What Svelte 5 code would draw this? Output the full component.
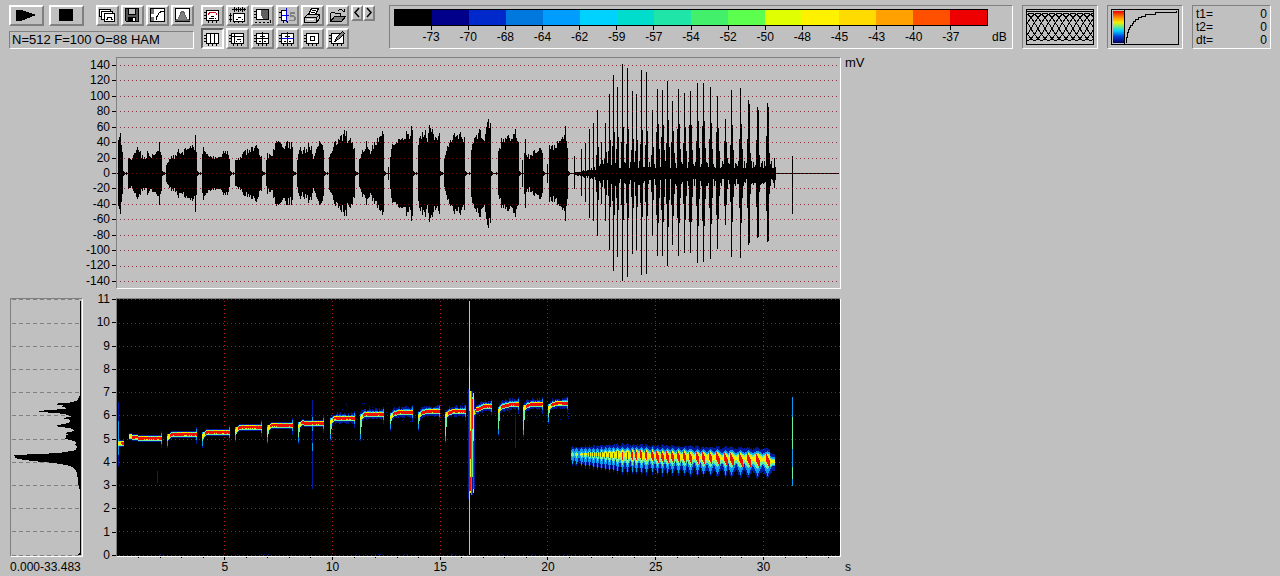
<script lang="ts">
  type Shape = [fill: string, stroke: string, d: string];
  type Tool = { label: string; shapes: Shape[]; pressed?: boolean };

  const DURATION = 33.55;
  const PLOT_WIDTH = 723;
  const WAVE_HEIGHT = 230;
  const SPEC_HEIGHT = 257;

  const ink = "#000";
  const chart = "M3.5 3.5H15.5V13.5H3.5ZM1 5.5H3M1 8.5H3M1 11.5H3M5.5 14V16M9.5 14V16M13.5 14V16";

  const fileTools: Tool[] = [
    {
      label: "Copy window",
      shapes: [
        ["#fff", ink, "M1.5 2.5H12.5V9.5H1.5Z"],
        ["#fff", ink, "M3.5 4.5H14.5V12.5H3.5Z"],
        ["#fff", ink, "M6.5 6.5H16.5V14.5H6.5Z"],
        ["none", ink, "M8 12.5H9.5V10.5H13.5V12.5H15"],
      ],
    },
    {
      label: "Save",
      shapes: [
        ["#555", ink, "M2.5 1.5H15.5V14.5H3.5L2.5 13.5Z"],
        ["#c0c0c0", ink, "M5.5 1.5H12.5V7.5H5.5Z"],
        [ink, ink, "M5.5 10.5H12.5V14.5H5.5Z"],
        ["#fff", "none", "M10 11H12V14H10Z"],
      ],
    },
    {
      label: "Transfer curve",
      shapes: [
        ["#fff", ink, "M2.5 1.5H16.5V14.5H2.5Z"],
        ["#777", "none", "M3 2H6V7H3ZM3 10H6V14H3Z"],
        ["none", ink, "M8.5 13V10.5L9.5 8.5L11.5 5.5L13.5 4.5H16"],
      ],
    },
    {
      label: "Window function",
      shapes: [
        ["#fff", ink, "M2.5 1.5H16.5V14.5H2.5Z"],
        ["#808080", "#606060", "M3 13.5L5.5 11.5L7.5 6.5L8.5 4.5H10.5L11.5 6.5L13.5 11.5L16 13.5Z"],
      ],
    },
  ];

  const viewTools: Tool[] = [
    {
      label: "Spectrogram",
      shapes: [
        ["#fff", ink, chart],
        ["none", "#d01020", "M5.5 8V6.5L7.5 5.5H12.5L13.5 6.5V8"],
        ["none", ink, "M6 11.5H7.5M8 9.5H11M11.5 11.5H13M8 11.5H11"],
      ],
    },
    {
      label: "Waveform and spectrogram",
      shapes: [
        ["none", ink, "M4 2.5H18M6.5 0V5M8.5 1V4M10.5 0V5M12.5 1V4M14.5 0V5M16.5 1V4"],
        ["#fff", ink, "M5.5 6.5H16.5V14.5H5.5Z"],
        ["none", ink, "M2.5 6V15M1 8.5H4M1 12.5H4M8 12.5H9.5M10 10.5H13M13.5 12.5H15M6.5 15V16M10.5 15V16M14.5 15V16"],
      ],
    },
    {
      label: "Shaded selection",
      shapes: [
        ["#fff", ink, "M3.5 2.5H15.5V12.5H3.5Z"],
        ["#606060", "none", "M8 3H15V12H10L8 8Z"],
        ["none", ink, "M1 4.5H3M1 7.5H3M1 10.5H3M2 15.5H4M6 15.5H8M10 15.5H12M14 15.5H16M17.5 13V16"],
      ],
    },
    {
      label: "Synthesis",
      shapes: [
        ["#fff", "none", "M3 3H9V13H3Z"],
        ["none", ink, "M9 3.5H3.5V13.5H9M1 5.5H3M1 10.5H3M5.5 14V16M9.5 14V16"],
        ["none", "#0000e0", "M8.5 1V15M4 8.5H11"],
        ["none", "#808080", "M17 5.5H12.5V9.5H16.5V13.5H11M17 6.5H13M12 8.5H16M17.5 10V13"],
      ],
    },
    {
      label: "Print",
      shapes: [
        ["#fff", ink, "M5.5 7.5L8.5 1.5H15.5L12.5 7.5Z"],
        ["none", ink, "M9 3.5H13M8 5.5H12"],
        ["#c0c0c0", ink, "M1.5 10.5L4.5 7.5H16.5V11.5L13.5 15.5H1.5Z"],
        ["none", ink, "M2 10.5H13.5V15M13.5 10.5L16.5 7.5"],
        ["#fff", "none", "M4 12H11V13H4Z"],
      ],
    },
    {
      label: "Open",
      shapes: [
        ["#c0c0c0", ink, "M2.5 14.5V6.5L3.5 5.5H6.5L7.5 6.5H12.5V9"],
        ["#808080", ink, "M2.5 14.5L6.5 9.5H17.5L13.5 14.5Z"],
        ["none", ink, "M10 3.5H11M11 2.5H14M14 3.5H15M15 4.5H17M16.5 2V5"],
      ],
    },
    {
      label: "Vertical cursors",
      pressed: true,
      shapes: [
        ["#fff", ink, chart],
        ["none", ink, "M7.5 4V13M11.5 4V13"],
      ],
    },
    {
      label: "Horizontal cursor",
      shapes: [
        ["#fff", ink, chart],
        ["none", ink, "M3 6.5H15M6.5 4V13M9 9.5H13M8 11.5H9M12 11.5H13"],
      ],
    },
    {
      label: "Crosshair",
      shapes: [
        ["#fff", ink, chart],
        ["none", ink, "M9.5 2V15M3 8.5H16M7 6.5H12M6 11.5H8M11 11.5H13"],
      ],
    },
    {
      label: "Free crosshair",
      shapes: [
        ["#fff", ink, chart],
        ["none", "#0000e0", "M9.5 2V15M3 8.5H16"],
        ["none", ink, "M7 6.5H9M10 6.5H12M6 11.5H8M11 11.5H13"],
      ],
    },
    {
      label: "Marker box",
      shapes: [
        ["#fff", ink, chart],
        ["none", ink, "M7.5 6.5H11.5V10.5H7.5Z"],
      ],
    },
    {
      label: "Edit label",
      shapes: [
        ["#fff", ink, chart],
        ["#808080", ink, "M7.5 10.5L8.5 7.5L14.5 1.5L16.5 3.5L10.5 9.5Z"],
        ["none", ink, "M6 11.5H8"],
      ],
    },
  ];

  const scaleColors = [
    "#000000", "#00008a", "#0029cc", "#0078dd", "#009dff", "#00d2ff", "#00ddcc", "#1fe6a8",
    "#43f06b", "#5dff4f", "#e0ff00", "#fff200", "#ffdb00", "#ffa100", "#ff5000", "#ee0000",
  ];
  const scaleLabels = [-73, -70, -68, -64, -62, -59, -57, -54, -52, -50, -48, -45, -43, -40, -37];

  const levels = Array.from({ length: 15 }, (_, i) => 140 - i * 20);
  const freqs = Array.from({ length: 12 }, (_, i) => 11 - i);
  const majorTimes = [5, 10, 15, 20, 25, 30];
  const seconds = Array.from({ length: 33 }, (_, i) => i + 1);

  const levelY = (mv: number) => Math.floor(115.5 - mv * 0.771) + 0.5;
  const freqY = (khz: number) => Math.floor(256 - khz * 23.2) + 0.5;
  const timeX = (s: number) => Math.floor((s / DURATION) * PLOT_WIDTH) + 0.5;

  // repeatable noise in 0..1
  function noise(n: number) {
    const v = Math.sin(n * 127.1 + 11.7) * 43758.5453;
    return v - Math.floor(v);
  }

  // whistles: first column, last column, peak height along the way
  const bursts: [number, number, number[]][] = [
    [1, 5, [36, 39, 39, 20]],
    [11, 44, [17, 15, 18, 25, 24, 17, 15, 21, 17, 18, 20, 24, 18]],
    [49, 79, [9, 14, 16, 18, 23, 19, 22, 25, 27, 28, 26]],
    [85, 112, [22, 25, 19, 19, 15, 14, 19, 20, 23, 17]],
    [118, 144, [14, 14, 14, 20, 24, 22, 27, 23, 28, 21, 16]],
    [149, 175, [12, 18, 18, 31, 34, 30, 29, 31, 29, 30]],
    [180, 206, [16, 27, 21, 26, 22, 33, 24, 12, 29, 32, 30, 24]],
    [212, 237, [16, 25, 30, 33, 37, 36, 42, 36, 35, 34, 25]],
    [242, 266, [15, 22, 30, 23, 28, 31, 38, 42]],
    [273, 295, [18, 31, 34, 35, 34, 35, 42, 39, 42]],
    [301, 322, [29, 38, 40, 44, 36, 46, 44, 38, 36, 41]],
    [327, 347, [14, 26, 34, 31, 40, 36, 38, 41, 34]],
    [354, 373, [27, 33, 38, 48, 37, 37, 52, 50]],
    [381, 401, [20, 34, 33, 41, 37, 40, 42, 35]],
    [407, 425, [20, 18, 17, 20, 26, 20, 29, 18]],
    [432, 450, [26, 28, 30, 32, 36, 40, 30]],
  ];

  // single columns that stand out of the whistles
  const strays: [number, number][] = [
    [42, 31], [78, 38], [86, 26], [150, 20], [229, 42], [271, 6], [294, 47], [312, 48],
    [371, 54], [405, 13], [408, 34], [430, 9], [448, 47],
  ];

  // trill pulses: column, peak height
  const pulses: [number, number][] = [
    [457, 17], [464, 24], [468, 30], [472, 44], [476, 50], [480, 63], [484, 31], [488, 50],
    [492, 79], [496, 98], [500, 86], [505, 109], [510, 105], [515, 82], [519, 79], [524, 103],
    [529, 101], [535, 63], [540, 84], [545, 83], [550, 92], [555, 72], [561, 84], [567, 80],
    [573, 82], [580, 90], [586, 90], [593, 86], [600, 77], [608, 54], [614, 83], [623, 85],
    [631, 73], [640, 66], [650, 70], [657, 15],
  ];

  const bar = (x: number, up: number, down = up) =>
    `M${x + 0.5} ${Math.round(115 - up)}V${Math.round(116 + down)}`;

  function waveformPath() {
    let d = "M0 115.5H722";
    for (const [from, to, peaks] of bursts) {
      for (let x = from; x <= to; x++) {
        const at = ((x - from) / (to - from)) * (peaks.length - 1);
        const i = Math.floor(at);
        const next = peaks[Math.min(i + 1, peaks.length - 1)];
        const h = peaks[i] + (next - peaks[i]) * (at - i);
        const rough = Math.min(8, h * 0.3) * noise(x) - 2;
        d += bar(x, h - rough, h - rough - noise(x + 900));
      }
      d += bar(to + 1, 2) + bar(to + 2, 1) + bar(from - 2, 1);
    }
    for (const [x, h] of strays) d += bar(x, h);
    for (let x = 458; x < 659; x++) {
      const body = x < 495 ? 1 + (x - 458) * 0.2 : 9;
      d += bar(x, body * (0.5 + 0.9 * noise(x)), body * (0.5 + 0.9 * noise(x + 50)));
    }
    pulses.forEach(([x, h], i) => {
      d += bar(x, h, h - 3 * noise(i));
      if (i < 5 || i > 34) return;
      d += bar(x + 1, h * (i > 17 ? 0.58 : 0.42)) + bar(x - 1, h * 0.28);
      if (i > 17) d += bar(x + 2, h * 0.28) + bar(x - 1, h * (0.3 + 0.3 * noise(i)));
      if (i > 31) d += bar(x + 1, h * 0.95);
    });
    return d + bar(675, 17, 40);
  }

  // power spectrum outline: row, distance from the right edge
  const spectrum = [
    [98, 1], [101, 2], [103, 7], [104, 14], [105, 30], [106, 17], [108, 19], [109, 12], [110, 17],
    [112, 42], [113, 41], [114, 24], [115, 17], [116, 12], [118, 8], [119, 21], [120, 12], [122, 9],
    [124, 12], [125, 17], [127, 25], [128, 19], [129, 12], [130, 7], [132, 6], [134, 15], [136, 11],
    [137, 17], [138, 12], [139, 16], [141, 11], [142, 6], [144, 4], [146, 5], [148, 3], [151, 4],
    [152, 9], [154, 21], [155, 41], [156, 66], [157, 67], [158, 64], [159, 66], [161, 56], [163, 37],
    [164, 26], [166, 14], [168, 8], [171, 4], [174, 3], [181, 2], [190, 1],
  ];
  const spectrumPath = "M69 96" + spectrum.map(([y, w]) => `L${69 - w} ${y}`).join("") + "L69 190Z";

  // whistle traces: first column, last column, first row, last row, foot of the rising edge
  const traces: number[][] = [
    [1, 6, 144, 144, 144],
    [12, 44, 137, 139, 134],
    [50, 79, 135, 135, 147],
    [85, 112, 133, 133, 147],
    [118, 144, 128, 128, 141],
    [150, 175, 126, 126, 143],
    [181, 206, 123, 124, 143],
    [213, 237, 119, 119, 140],
    [243, 266, 115, 115, 140],
    [273, 295, 114, 113, 130],
    [301, 322, 113, 112, 130],
    [328, 348, 113, 112, 142],
    [355, 374, 112, 107, 118],
    [381, 401, 108, 105, 135],
    [406, 425, 106, 105, 136],
    [431, 450, 105, 104, 123],
  ];

  const layerColors = ["#001a9c", "#0a9cf0", "#6cf0a0", "#f4f000", "#f01000"];

  function spectrogramPaths() {
    const layers = ["", "", "", "", ""];
    const put = (layer: number, x: number, top: number, bottom: number) => {
      if (bottom > top) layers[layer] += `M${x + 0.5} ${Math.round(top)}V${Math.round(bottom)}`;
    };

    for (const [from, to, y0, y1, foot] of traces) {
      const loud = from > 210 ? 2 : 0;
      for (let x = from; x <= to; x++) {
        const edge = x - from;
        const dip = foot > y0 && edge < 4 ? (4 - edge) * 0.9 : 0;
        const y = Math.round(y0 + (y1 - y0) * Math.min(1, edge / 12) + dip);
        const r = noise(x * 3 + y0);
        put(0, x, y - 3 - loud * r * 1.6, y + 4 + loud * noise(x + 7));
        put(1, x, y - 2 - (loud ? r * 1.5 : 0), y + 3);
        put(2, x, y - 2, y + 3);
        put(3, x, y - 2 + (r > 0.5 ? 1 : 0), y + 2);
        if (edge > 2) put(4, x, y - 1, y + 1 + (r > 0.2 ? 1 : 0));
      }
      if (foot > y0) {
        put(0, from, y0, foot + 2);
        put(1, from, y0, foot);
        put(2, from, y0 + 2, foot - 5);
        put(2, from + 1, y0, y0 + (foot - y0) * 0.5);
        put(3, from + 1, y0, y0 + 5);
      }
      if (from > 6) {
        put(0, to, y1 - 7, y1 + 10);
        put(1, to, y1 - 5, y1 + 6);
        put(3, to, y1 - 2, y1 + 3);
      }
    }

    // clicks
    put(0, 1, 103, 167);
    put(1, 1, 122, 156);
    put(0, 195, 101, 190);
    put(1, 195, 118, 132);
    put(1, 195, 144, 152);
    put(0, 40, 172, 184);
    put(0, 398, 118, 149);
    put(1, 675, 98, 187);
    put(2, 675, 118, 150);
    put(2, 675, 168, 180);
    put(2, 352, 2, 256);
    put(3, 352, 68, 90);
    put(1, 352, 194, 232);
    put(0, 351, 90, 200);
    put(0, 355, 92, 196);
    put(0, 357, 100, 190);
    put(1, 354, 92, 196);
    put(3, 353, 92, 194);
    put(3, 356, 94, 194);
    put(2, 355, 98, 178);
    put(4, 352, 112, 192);
    put(4, 353, 132, 160);
    put(4, 353, 178, 192);
    put(4, 355, 100, 130);
    put(4, 356, 142, 190);

    const centers = [455, 459, ...pulses.slice(1, -1).map((p) => p[0])];
    for (let x = 454; x < 658; x++) {
      let near = 0;
      centers.forEach((c, i) => {
        if (Math.abs(x - c) < Math.abs(x - centers[near])) near = i;
      });
      const gap = ((centers[near + 1] ?? 659) - centers[near]) / 2;
      const dx = x - centers[near];
      const s = Math.max(0, 1 - Math.abs(dx) / gap);
      const filled = Math.min(1, (x - 454) / 50);
      const grow = (0.6 + 0.4 * filled) * (x > 652 ? 0.85 : 1);
      const y = 155 + (x - 454) * 0.03 + (x > 652 ? 2 : 0);
      const r = noise(x);
      put(0, x, y - (9 + 2 * s + 2 * r) * grow, y + (10 + 8 * s + 2 * r) * grow);
      if (x < 486 && s < 0.4) {
        put(1, x, y - 3, y + 4);
        continue;
      }
      put(1, x, y - (6 + 3 * s) * grow, y + (5 + 11 * s) * grow);
      put(2, x, y - (4 * filled + 3 * s) * grow, y + (4 * filled + 5 * s) * grow);
      put(3, x, y - (2 + 4 * s) * filled, y + (1 + 4 * s) * filled);
      const wide = x > 510 ? 1 : 0;
      if (x > 468 && dx >= -wide && dx <= (x > 535 ? 1 : 0) + (x > 595 ? 1 : 0)) {
        const tilt = dx * 2;
        const half = x < 500 ? 2.5 : 4;
        put(4, x, y - half + tilt, y + half + tilt);
      }
    }

    // faint specks round the traces
    for (let i = 0; i < 90; i++) {
      const x = Math.floor(210 + noise(i) * 245);
      const y = 104 + noise(i + 300) * 18;
      put(0, x, y, y + 1);
    }
    for (let i = 0; i < 24; i++) put(0, Math.floor(noise(i + 70) * 560), 255, 256);
    return layers;
  }

  const wave = waveformPath();
  const layers = spectrogramPaths();

  // overlapping analysis windows
  const windows = Array.from({ length: 18 }, (_, k) => {
    let d = "";
    for (let i = 0; i <= 52; i += 2) {
      const x = (k - 8) * 7 + i;
      const y = 32 - 28 * (0.5 - 0.5 * Math.cos((2 * Math.PI * i) / 52));
      d += `${i ? "L" : "M"}${x} ${y.toFixed(1)}`;
    }
    return d;
  }).join("");
</script>

{#snippet toolButton(tool: Tool)}
  <button type="button" class="tool" class:pressed={tool.pressed} aria-label={tool.label}>
    <svg viewBox="0 0 19 17" width="19" height="17" aria-hidden="true">
      {#each tool.shapes as [fill, stroke, d]}
        <path {fill} {stroke} {d} />
      {/each}
    </svg>
  </button>
{/snippet}

<div class="app">
  <header class="toolbar">
    <div class="transport">
      <div class="row">
        <button type="button" class="wide" aria-label="Play">
          <svg viewBox="0 0 31 17" width="31" height="17" aria-hidden="true">
            <path d="M5 3H10L24 7.500V8.500L10 14H5Z" />
          </svg>
        </button>
        <button type="button" class="wide" aria-label="Stop">
          <svg viewBox="0 0 31 17" width="31" height="17" aria-hidden="true">
            <path d="M8 2H22V14H8Z" />
          </svg>
        </button>
        <div class="tools file">
          {#each fileTools as tool}
            {@render toolButton(tool)}
          {/each}
        </div>
      </div>
      <output class="sunken status">N=512 F=100 O=88 HAM</output>
    </div>

    <div class="tools view">
      {#each viewTools as tool}
        {@render toolButton(tool)}
      {/each}
    </div>

    <div class="steps">
      <button type="button" class="step" aria-label="Previous">
        <svg viewBox="0 0 8 12" width="8" height="12" aria-hidden="true"><path d="M6 1L2 5.500L6 10" /></svg>
      </button>
      <button type="button" class="step" aria-label="Next">
        <svg viewBox="0 0 8 12" width="8" height="12" aria-hidden="true"><path d="M2 1L6 5.500L2 10" /></svg>
      </button>
    </div>

    <section class="sunken scale">
      <div class="scale-main">
        <div class="scale-bar">
          {#each scaleColors as color}
            <span style="background: {color}"></span>
          {/each}
        </div>
        <div class="scale-labels">
          {#each scaleLabels as label}
            <span>{label}</span>
          {/each}
        </div>
      </div>
      <span class="unit">dB</span>
    </section>

    <section class="sunken preview">
      <svg viewBox="0 0 68 36" class="crisp" aria-hidden="true">
        <path class="line" d={windows} />
        <path class="line" d="M.5 .5H67.500V35.500H.5ZM0 2.500H68" />
      </svg>
    </section>

    <section class="sunken preview">
      <svg viewBox="0 0 68 36" class="crisp" aria-hidden="true">
        <defs>
          <linearGradient id="heat" x1="0" y1="0" x2="0" y2="1">
            <stop offset="0" stop-color="#e80000" />
            <stop offset=".22" stop-color="#ff9a00" />
            <stop offset=".36" stop-color="#f4f000" />
            <stop offset=".5" stop-color="#60ec90" />
            <stop offset=".62" stop-color="#00cfff" />
            <stop offset=".8" stop-color="#0040d8" />
            <stop offset="1" stop-color="#000060" />
          </linearGradient>
        </defs>
        <rect x="2" y="2" width="11" height="32" fill="url(#heat)" />
        <path
          class="line"
          d="M.5 .5H67.500V35.500H.5ZM13.500 0V36M15.500 34V28.500H16.500V23.500H17.500V20.500H18.500V18.500H19.500V16.500H21.500V14.500H22.500V12.500H24.500V10.500H27.500V8.500H30.500V7.500H34.500V5.500H44.500V3.500H65.500V2"
        />
      </svg>
    </section>

    <dl class="sunken cursors">
      <div><dt>t1=</dt><dd>0</dd></div>
      <div><dt>t2=</dt><dd>0</dd></div>
      <div><dt>dt=</dt><dd>0</dd></div>
    </dl>
  </header>

  <main class="plots">
    <div class="axis levels">
      {#each levels as level}
        <span>{level}</span>
      {/each}
    </div>
    <div class="sunken wave">
      <svg viewBox="0 0 {PLOT_WIDTH} {WAVE_HEIGHT}" height={WAVE_HEIGHT} preserveAspectRatio="none" class="crisp" role="img" aria-label="Waveform">
        <path class="line" d={wave} />
        {#each levels as level}
          <path class="level-grid" d="M3 {levelY(level)}H{PLOT_WIDTH}" />
        {/each}
      </svg>
    </div>
    <span class="wave-unit">mV</span>

    <div class="sunken power">
      <svg viewBox="0 0 71 {SPEC_HEIGHT}" height={SPEC_HEIGHT} preserveAspectRatio="none" class="crisp" role="img" aria-label="Power spectrum">
        {#each freqs as freq}
          <path class="power-grid" d="M1 {freqY(freq)}H70" />
        {/each}
        <path d={spectrumPath} />
        <path d="M69 2H70V256H67L69 253Z" />
      </svg>
    </div>
    <div class="axis freqs">
      {#each freqs as freq}
        <span>{freq}</span>
      {/each}
    </div>
    <div class="sunken spectrogram">
      <svg viewBox="0 0 {PLOT_WIDTH} {SPEC_HEIGHT}" height={SPEC_HEIGHT} preserveAspectRatio="none" class="crisp" role="img" aria-label="Spectrogram">
        {#each freqs as freq}
          <path class="spec-grid" d="M2 {freqY(freq)}H{PLOT_WIDTH}" />
        {/each}
        {#each majorTimes as time}
          <path class="spec-grid" d="M{timeX(time)} 2V{SPEC_HEIGHT}" />
        {/each}
        {#each layers as d, i}
          <path class="trace" stroke={layerColors[i]} {d} />
        {/each}
      </svg>
    </div>

    <span class="range">0.000-33.483</span>
    <div class="time-axis">
      <svg viewBox="0 0 {PLOT_WIDTH} 3" height="3" preserveAspectRatio="none" class="crisp" aria-hidden="true">
        {#each seconds as second}
          <path class="line" d="M{timeX(second)} 0V{second % 5 ? 1 : 3}" />
        {/each}
      </svg>
      <div class="times">
        {#each majorTimes as time}
          <span>{time}</span>
        {/each}
      </div>
    </div>
    <span class="time-unit">s</span>
  </main>
</div>

<style>
  :global(body) {
    background: #c0c0c0;
  }
  .app {
    padding-top: 5px;
    font: 12px/15px "Liberation Sans", Arial, sans-serif;
    color: #000;
  }
  svg {
    display: block;
  }
  .crisp {
    width: 100%;
    shape-rendering: crispEdges;
  }
  .line {
    fill: none;
    stroke: #000;
  }
  .sunken {
    box-sizing: border-box;
    border: 1px solid;
    border-color: #808080 #fff #fff #808080;
  }

  /* toolbar */
  .toolbar {
    display: flex;
    gap: 9px;
    height: 44px;
    padding: 0 9px;
  }
  .transport {
    display: flex;
    flex-direction: column;
    justify-content: space-between;
    width: 185px;
  }
  .row {
    display: flex;
    gap: 5px;
  }
  .status {
    display: block;
    height: 18px;
    padding-left: 2px;
    font-size: 13px;
    line-height: 16px;
  }
  button {
    box-sizing: border-box;
    display: block;
    height: 21px;
    margin: 0;
    padding: 0;
    border: 2px solid;
    border-color: #fff #808080 #808080 #fff;
    background: #c0c0c0;
  }
  button svg {
    shape-rendering: crispEdges;
  }
  .wide {
    width: 35px;
  }
  .tool {
    width: 23px;
  }
  .pressed {
    border-color: #606060 #fff #fff #606060;
    background: #d4d4d4;
  }
  .tools {
    display: grid;
    gap: 2px;
  }
  .file {
    grid-template-columns: repeat(4, 23px);
    margin-left: auto;
  }
  .view {
    grid-template-columns: repeat(6, 23px);
    margin-left: -2px;
  }
  .steps {
    display: flex;
    margin: 0 5px 0 -7px;
  }
  .step {
    width: 12px;
    height: 16px;
  }
  .step path {
    fill: none;
    stroke: #000;
    stroke-width: 1.5;
    shape-rendering: auto;
  }
  .scale {
    display: flex;
    flex: 1;
    gap: 4px;
    padding: 3px 4px;
  }
  .scale-main {
    flex: 1;
  }
  .scale-bar {
    display: flex;
    height: 15px;
    border: 1px solid #000;
  }
  .scale-bar span {
    flex: 1;
  }
  .scale-labels {
    display: flex;
    padding: 0 calc(100% / 32);
  }
  .scale-labels span {
    display: flex;
    flex: 1;
    flex-direction: column;
    align-items: center;
  }
  .scale-labels span::before {
    content: "";
    width: 1px;
    height: 4px;
    background: #000;
  }
  .unit {
    align-self: flex-end;
    width: 16px;
  }
  .preview {
    width: 76px;
    padding: 3px;
  }
  .cursors {
    width: 79px;
    margin: 0;
    padding: 2px 3px;
    line-height: 13px;
  }
  .cursors div {
    display: flex;
    justify-content: space-between;
  }
  .cursors dd {
    margin: 0;
  }

  /* plots */
  .plots {
    display: grid;
    grid-template-columns: 73px 33px 725fr 439fr;
    padding: 8px 0 0 10px;
  }
  .axis {
    display: flex;
    flex-direction: column;
    grid-column: 2;
    justify-content: space-between;
  }
  .axis span {
    display: flex;
    align-items: center;
    justify-content: flex-end;
    gap: 2px;
    height: 15px;
  }
  .axis span::after {
    content: "";
    width: 4px;
    height: 1px;
    background: #000;
  }
  .levels {
    margin-bottom: 9px;
    padding-top: 1px;
  }
  .freqs {
    margin: -6px 0;
  }
  .wave {
    margin-bottom: 9px;
  }
  .wave-unit,
  .time-unit {
    padding-left: 4px;
  }
  .wave-unit {
    font-size: 13px;
    line-height: 11px;
  }
  .level-grid {
    stroke: #780018;
    stroke-dasharray: 1 3;
    opacity: 0.75;
  }
  .power-grid {
    stroke: #808080;
    stroke-dasharray: 4 3;
  }
  .spectrogram {
    background: #000;
  }
  .spec-grid {
    stroke: #b01420;
    stroke-dasharray: 1 3;
  }
  .trace {
    fill: none;
  }
  .range,
  .time-unit {
    padding-top: 3px;
  }
  .range {
    grid-column: 1 / 3;
  }
  .time-axis {
    padding: 0 1px;
  }
  .times {
    display: flex;
    padding: 0 3.130% 0 7.452%;
  }
  .times span {
    flex: 1;
    text-align: center;
  }
</style>
